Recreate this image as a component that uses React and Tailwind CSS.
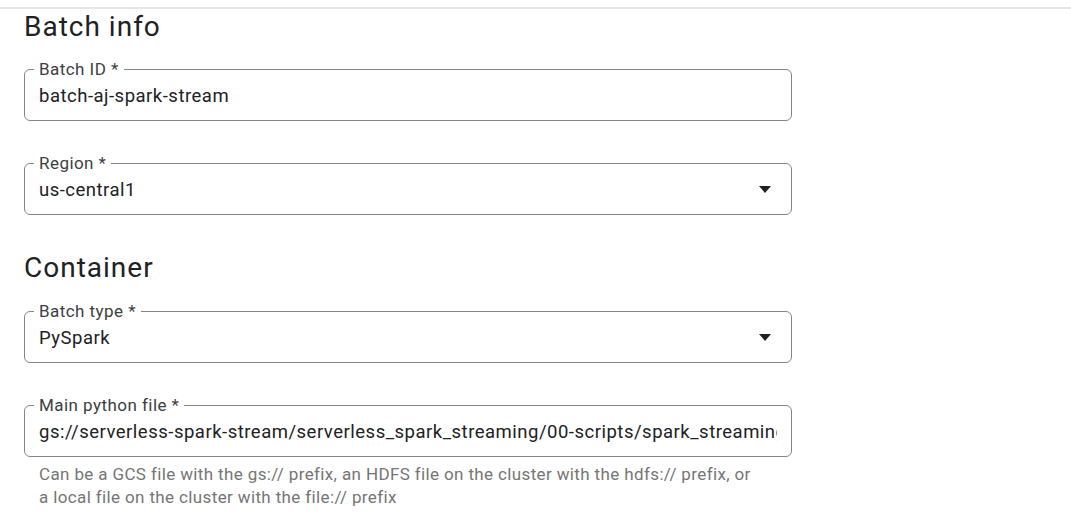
import React from "react";

const font = { fontFamily: "Roboto, 'Liberation Sans', sans-serif" };

function Field({ label, value, select }) {
  return (
    <div className="relative w-[768px] h-[52px] rounded-[6px] border border-[#80868b] flex items-center pl-[14px] pr-[14px]">
      <span className="absolute -top-[12px] left-[9px] bg-white px-[5px] text-[17px] leading-[22px] tracking-[0.45px] text-[#3c4043]">
        {label}
      </span>
      <div className="flex-1 pt-[3px] overflow-hidden whitespace-nowrap text-[18.5px] tracking-[0.5px] text-[#202124]">
        {value}
      </div>
      {select && (
        <svg width="12" height="7" viewBox="0 0 12 7" className="ml-2 mr-[6px] mt-[1px]">
          <path d="M0 0h12L6 7z" fill="#202124" />
        </svg>
      )}
    </div>
  );
}

export default function App() {
  return (
    <div className="min-h-screen bg-white" style={font}>
      <div className="pt-[7px]">
        <div className="h-[2px] bg-[#e6e6e6]" />
      </div>
      <div className="pl-[24px]">
        {/* Batch info */}
        <h2 className="text-[28px] leading-[36px] tracking-[1px] text-[#202124]">Batch info</h2>
        <div className="mt-[24px]">
          <Field label="Batch ID *" value="batch-aj-spark-stream" />
        </div>
        <div className="mt-[42px]">
          <Field label="Region *" value="us-central1" select />
        </div>

        {/* Container */}
        <h2 className="mt-[35px] text-[28px] leading-[36px] tracking-[1px] text-[#202124]">Container</h2>
        <div className="mt-[25px]">
          <Field label="Batch type *" value="PySpark" select />
        </div>
        <div className="mt-[42px]">
          <Field
            label="Main python file *"
            value="gs://serverless-spark-stream/serverless_spark_streaming/00-scripts/spark_streaming.py"
          />
        </div>
        <p className="mt-[6px] pl-[15px] whitespace-nowrap text-[17px] leading-[23px] tracking-[0.37px] text-[#757575]">
          Can be a GCS file with the gs:// prefix, an HDFS file on the cluster with the hdfs:// prefix, or
          <br />
          a local file on the cluster with the file:// prefix
        </p>
      </div>
    </div>
  );
}
